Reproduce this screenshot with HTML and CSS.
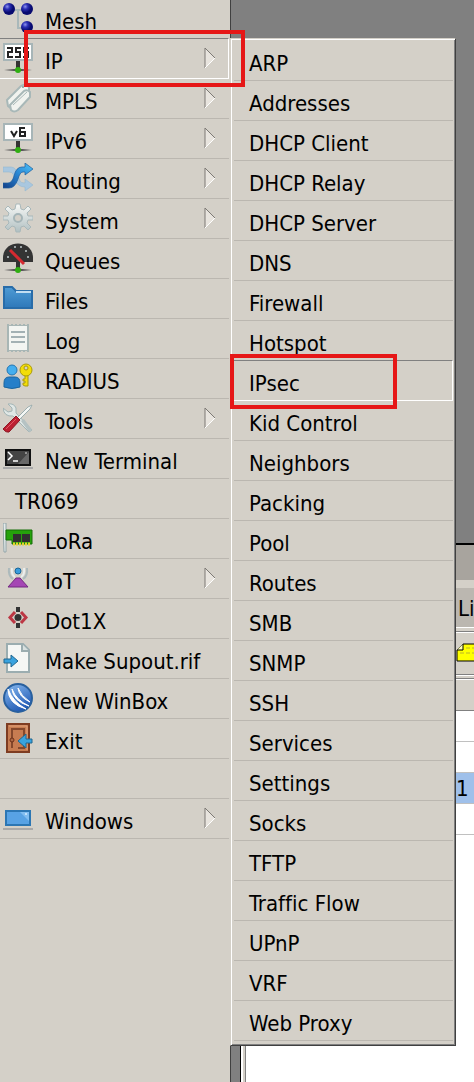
FILE: index.html
```html
<!DOCTYPE html>
<html lang="en">
<head>
<meta charset="utf-8">
<meta name="viewport" content="width=device-width">
<title>WinBox</title>
<link rel="stylesheet" href="styles.css">
</head>
<body>
<div class="app">
<nav class="menu" aria-label="Main menu">
<button class="item first"><svg class="icon" viewBox="0 0 30 30"><defs><radialGradient id="ball" cx=".35" cy=".3"><stop offset="0" stop-color="#8f95ee"/><stop offset=".45" stop-color="#2a2eb4"/><stop offset="1" stop-color="#080a70"/></radialGradient></defs><path d="M6 7h18M15 7v18h9" fill="none" stroke="#a9b8ba" stroke-width="2"/><circle cx="6" cy="6" r="6" fill="url(#ball)"/><circle cx="24" cy="6" r="6" fill="url(#ball)"/><circle cx="24" cy="24" r="6" fill="url(#ball)"/></svg><span>Mesh</span></button>
<button class="item open" aria-expanded="true"><svg class="icon" viewBox="0 0 30 30"><path d="M1 1h28v16H1z" fill="#fff" stroke="#a7b5b7" stroke-width="2"/><path d="M4 5h5v4H5v5h5M18 5h-5v4h4v5h-5M26 5h-5v4h4v5h-5" fill="none" stroke="#222" stroke-width="2"/><path d="M13 18h4v7h-4z" fill="#333"/><path d="M1 27l10-1h8l10 1-10 1h-8z" fill="#555"/><circle cx="15" cy="27" r="3" fill="#2fae12"/></svg><span>IP</span><svg class="arrow" viewBox="0 0 12 22"><path d="M1 1l10 10L1 21z" fill="#e8e4de"/><path d="M1 21V1l10 10" fill="none" stroke="#7c7974"/><path d="M11 11L1 21" stroke="#fff"/></svg></button>
<button class="item"><svg class="icon" viewBox="0 0 30 30"><g fill="#f1f3ef" stroke="#a8b8b8" stroke-width="2"><path d="M4 17L18 3q4-3 8 1v6L13 24q-4 3-8-1z"/><path d="M7 22L21 8q3-2 6 1v5L15 27q-4 3-7 0z"/><path d="M10 22L24 9" fill="none" stroke-width="1"/></g><circle cx="20" cy="4" r="1" fill="#859898"/></svg><span>MPLS</span><svg class="arrow" viewBox="0 0 12 22"><path d="M1 1l10 10L1 21z" fill="#e8e4de"/><path d="M1 21V1l10 10" fill="none" stroke="#7c7974"/><path d="M11 11L1 21" stroke="#fff"/></svg></button>
<button class="item"><svg class="icon" viewBox="0 0 30 30"><path d="M1 1h28v16H1z" fill="#fff" stroke="#a7b5b7" stroke-width="2"/><path d="M8 8l3 5 3-5M22 5h-5v8h5V9h-5" fill="none" stroke="#222" stroke-width="2"/><path d="M13 18h4v7h-4z" fill="#333"/><path d="M1 27l10-1h8l10 1-10 1h-8z" fill="#555"/><circle cx="15" cy="27" r="3" fill="#2fae12"/></svg><span>IPv6</span><svg class="arrow" viewBox="0 0 12 22"><path d="M1 1l10 10L1 21z" fill="#e8e4de"/><path d="M1 21V1l10 10" fill="none" stroke="#7c7974"/><path d="M11 11L1 21" stroke="#fff"/></svg></button>
<button class="item"><svg class="icon" viewBox="0 0 30 30"><defs><linearGradient id="route" x1="0" y1="1" x2="1" y2="0"><stop offset="0" stop-color="#123f87"/><stop offset=".5" stop-color="#2782d0"/><stop offset="1" stop-color="#4fc4fa"/></linearGradient></defs><path d="M0 4h8q5 0 7 8l2 6q1 2 5 2v-4l8 6-8 6v-4q-8 0-10-8l-2-5q-1-2-4-2H0z" fill="#a9c7df" stroke="#96b9d2" stroke-width=".6"/><path d="M0 20h5q4 0 6-7 2-9 8-9h3V0l8 6-8 6V9h-2q-3 0-5 7-3 9-9 9H0z" fill="url(#route)" stroke="#1d5c9c" stroke-width=".7"/></svg><span>Routing</span><svg class="arrow" viewBox="0 0 12 22"><path d="M1 1l10 10L1 21z" fill="#e8e4de"/><path d="M1 21V1l10 10" fill="none" stroke="#7c7974"/><path d="M11 11L1 21" stroke="#fff"/></svg></button>
<button class="item"><svg class="icon" viewBox="0 0 30 30"><defs><linearGradient id="gear" x2="0" y2="1"><stop offset="0" stop-color="#f7f8f6"/><stop offset="1" stop-color="#b1c0c2"/></linearGradient></defs><path d="M13 1h4l1 5 3 1 4-4 3 3-4 4 1 3h5v4h-5l-1 3 4 4-3 3-4-4-3 1-1 5h-4l-1-5-3-1-4 4-3-3 4-4-1-3H0v-4h5l1-3-4-4 3-3 4 4 3-1z" fill="url(#gear)" stroke="#a9b8ba"/><circle cx="15" cy="15" r="4" fill="#d4d0c8" stroke="#a5b5b8" stroke-width="2"/></svg><span>System</span><svg class="arrow" viewBox="0 0 12 22"><path d="M1 1l10 10L1 21z" fill="#e8e4de"/><path d="M1 21V1l10 10" fill="none" stroke="#7c7974"/><path d="M11 11L1 21" stroke="#fff"/></svg></button>
<button class="item"><svg class="icon" viewBox="0 0 30 30"><path d="M0 19v-5C1-4 29-4 30 14v5z" fill="#343434"/><g fill="#bfc8cb"><circle cx="5" cy="14" r="1"/><circle cx="12" cy="4" r="1"/><circle cx="18" cy="4" r="1"/><circle cx="23" cy="8" r="1"/><circle cx="25" cy="14" r="1"/></g><path d="M7 7l14 14" stroke="#d52a30" stroke-width="3"/><path d="M13 19h4v7h-4z" fill="#333"/><path d="M1 27l10-1h8l10 1-10 1h-8z" fill="#555"/><circle cx="15" cy="27" r="3" fill="#2fae12"/></svg><span>Queues</span></button>
<button class="item"><svg class="icon" viewBox="0 0 30 30"><defs><linearGradient id="folder" x2="0" y2="1"><stop offset="0" stop-color="#4e9bd5"/><stop offset="1" stop-color="#2e78b9"/></linearGradient></defs><path d="M1 4h8l4 4h16v17H1z" fill="url(#folder)" stroke="#286ca9" stroke-width="2"/><path d="M13 9h15" stroke="#9dcaec" stroke-width="2"/><path d="M13 9h15" stroke="#e8f2f8"/></svg><span>Files</span></button>
<button class="item"><svg class="icon" viewBox="0 0 30 30"><path d="M5 2h20v26H5z" fill="#f3f5f2" stroke="#a8b6b5" stroke-width="2"/><path d="M6 1h19M6 29h19" stroke="#d4d0c8" stroke-width="2" stroke-dasharray="2 2"/><path d="M8 9h14M8 14h14M8 19h14" stroke="#a3b1b4" stroke-width="2"/></svg><span>Log</span></button>
<button class="item"><svg class="icon" viewBox="0 0 30 30"><path d="M1 24v-4q0-6 5-6h6q5 0 5 6v4q-8 3-16 0z" fill="#267fc9" stroke="#1b659f"/><circle cx="9" cy="7" r="5" fill="#44aeef" stroke="#2475b1"/><g fill="#f3dd08" stroke="#aa9b0a"><path d="M22 11h3v12h-3l-2-1v-2h2v-2h-2v-2h2z"/><circle cx="23" cy="7" r="6"/></g><circle cx="23" cy="5" r="2" fill="#d4d0c8" stroke="#aa9b0a"/></svg><span>RADIUS</span></button>
<button class="item"><svg class="icon" viewBox="0 0 30 30"><path d="M5 1q6-1 8 4v5l16 17-3 2-16-16Q1 14 0 5l5 4 4-1V5z" fill="#e0e7e5" stroke="#a2b4b5"/><path d="M29 2l-2 4-11 11-2-2L25 4z" fill="#f4f6f4" stroke="#9caeaf"/><path d="M18 18l3-2 8 11-3 2z" fill="#b5c2c3"/><path d="M13 13l4 4L6 29q-3 1-6-3z" fill="#bd2032" stroke="#8d1623"/><path d="M13 16L3 26" stroke="#e25765"/></svg><span>Tools</span><svg class="arrow" viewBox="0 0 12 22"><path d="M1 1l10 10L1 21z" fill="#e8e4de"/><path d="M1 21V1l10 10" fill="none" stroke="#7c7974"/><path d="M11 11L1 21" stroke="#fff"/></svg></button>
<button class="item"><svg class="icon" viewBox="0 0 30 30"><path d="M3 7h24v15H3z" fill="#444" stroke="#111" stroke-width="2"/><path d="M15 21L26 9v12z" fill="#686868"/><path d="M5 9l4 4-4 4M10 18h5" fill="none" stroke="#fff" stroke-width="1.5"/><circle cx="23" cy="10" r="1" fill="#aaa"/><path d="M0 25h30" stroke="#a8a8a8" stroke-width="2"/></svg><span>New Terminal</span></button>
<button class="item plain"><span>TR069</span></button>
<button class="item"><svg class="icon" viewBox="0 0 30 30"><path d="M0 0h3v29H1z" fill="#e4ebea" stroke="#92a4a8"/><path d="M3 7h26v14H9v-4H3z" fill="#25a20b" stroke="#176f08"/><path d="M10 11h8v8h-8zM19 11h8v8h-8z" fill="#303030"/><path d="M10 21h17" stroke="#e4d32d" stroke-width="3" stroke-dasharray="2 1"/></svg><span>LoRa</span></button>
<button class="item"><svg class="icon" viewBox="0 0 30 30"><path d="M5 24h20L17 15h-4z" fill="#a546b4" stroke="#722981"/><circle cx="15" cy="8" r="3" fill="#399cdd" stroke="#176598"/><path d="M9 5q-1 7 3 9M21 5q1 7-3 9" fill="none" stroke="#e9eeee" stroke-width="2"/><path d="M6 5q-1 8 4 11M24 5q1 8-4 11" fill="none" stroke="#adbabc" stroke-width="2"/></svg><span>IoT</span><svg class="arrow" viewBox="0 0 12 22"><path d="M1 1l10 10L1 21z" fill="#e8e4de"/><path d="M1 21V1l10 10" fill="none" stroke="#7c7974"/><path d="M11 11L1 21" stroke="#fff"/></svg></button>
<button class="item"><svg class="icon" viewBox="0 0 30 30"><path d="M13 4h4v5h-4zM13 20h4v5h-4z" fill="#333"/><circle cx="15" cy="14.5" r="3.5" fill="#333"/><path d="M12 9l-5 5.500 5 5.500M18 9l5 5.500-5 5.500" fill="none" stroke="#bc3744" stroke-width="3"/></svg><span>Dot1X</span></button>
<button class="item"><svg class="icon" viewBox="0 0 30 30"><path d="M4 1h16l6 6v22H4z" fill="#f5f7f5" stroke="#9badb0" stroke-width="2"/><path d="M19 1v7h7" fill="#d8e0df" stroke="#9badb0" stroke-width="2"/><path d="M1 16h7v-4l7 6-7 6v-4H1z" fill="#39a3df" stroke="#21678f"/></svg><span>Make Supout.rif</span></button>
<button class="item"><svg class="icon" viewBox="0 0 30 30"><defs><linearGradient id="globe" x2=".5" y2="1"><stop offset="0" stop-color="#8bbcf1"/><stop offset="1" stop-color="#225bb5"/></linearGradient></defs><circle cx="15" cy="15" r="14" fill="url(#globe)" stroke="#29609e" stroke-width="2"/><path d="M5 6q0 15 18 20-13-7-18-20M9 6q1 12 17 17Q13 17 9 6M15 5q1 9 12 14Q18 13 15 5" fill="#fff" stroke="#fff"/></svg><span>New WinBox</span></button>
<button class="item"><svg class="icon" viewBox="0 0 30 30"><path d="M4 1h22v28H4z" fill="#c77c51" stroke="#7e3c21" stroke-width="2"/><path d="M9 25V6h12v19h-6" fill="none" stroke="#85482c" stroke-width="2"/><path d="M6 3h18v24" fill="none" stroke="#e2a37d"/><circle cx="9" cy="17" r="2" fill="#ab6845" stroke="#6e3019"/><path d="M29 16h-6v-5l-8 7 8 7v-5h6z" fill="#39a3df" stroke="#21678f"/></svg><span>Exit</span></button>
<div class="spacer"></div>
<button class="item"><svg class="icon" viewBox="0 0 30 30"><path d="M3 8h24v14H3z" fill="#58a2e4" stroke="#2c76b3" stroke-width="2"/><path d="M17 9h9v9z" fill="#82bdf0"/><circle cx="23" cy="11" r="1" fill="#d4edff"/><path d="M0 26h30" stroke="#aaa9a8" stroke-width="2"/></svg><span>Windows</span><svg class="arrow" viewBox="0 0 12 22"><path d="M1 1l10 10L1 21z" fill="#e8e4de"/><path d="M1 21V1l10 10" fill="none" stroke="#7c7974"/><path d="M11 11L1 21" stroke="#fff"/></svg></button>
</nav>
<main class="workspace">
<section class="window">
<div class="titlebar"></div>
<div class="tab">Li</div>
<div class="tools"><svg class="note" viewBox="0 0 30 20"><path d="M7 1h22v17H1V7z" fill="#ff0" stroke="#000"/><path d="M7 1v6H1" fill="#ffffb0" stroke="#000"/><path d="M10 5h16M4 10h22" stroke="#bbb42c" stroke-dasharray="4 2"/></svg></div>
<div class="gap"></div>
<div class="head"></div>
<div class="row"></div>
<div class="row"></div>
<div class="row chosen">1</div>
<div class="row"></div>
</section>
</main>
<nav class="submenu" aria-label="IP menu">
<button class="item">ARP</button>
<button class="item">Addresses</button>
<button class="item">DHCP Client</button>
<button class="item">DHCP Relay</button>
<button class="item">DHCP Server</button>
<button class="item">DNS</button>
<button class="item">Firewall</button>
<button class="item">Hotspot</button>
<button class="item open">IPsec</button>
<button class="item">Kid Control</button>
<button class="item">Neighbors</button>
<button class="item">Packing</button>
<button class="item">Pool</button>
<button class="item">Routes</button>
<button class="item">SMB</button>
<button class="item">SNMP</button>
<button class="item">SSH</button>
<button class="item">Services</button>
<button class="item">Settings</button>
<button class="item">Socks</button>
<button class="item">TFTP</button>
<button class="item">Traffic Flow</button>
<button class="item">UPnP</button>
<button class="item">VRF</button>
<button class="item">Web Proxy</button>
</nav>
<div class="mark mark-ip"></div>
<div class="mark mark-ipsec"></div>
</div>
</body>
</html>
```
FILE: styles.css
```css
* { box-sizing: border-box; }
body {
  margin: 0;
  background: #808080;
  color: #000;
  font-family: Tahoma, "DejaVu Sans Condensed", "DejaVu Sans", sans-serif;
  font-size: 22px;
  font-variant-ligatures: none;
}
.app {
  position: relative;
  display: grid;
  grid-template-columns: 231px 1fr;
  min-height: 100vh;
  overflow: hidden;
}
.menu {
  background: #d4d0c8;
  border-right: 1px solid #404040;
  padding-right: 1px;
}
.item {
  position: relative;
  display: flex;
  width: 100%;
  height: 40px;
  align-items: flex-start;
  padding: 4px 13px 0 3px;
  border: 0;
  border-bottom: 1px solid #bbb7b0;
  background: none;
  color: inherit;
  font: inherit;
  font-variant-ligatures: none;
  line-height: 37px;
  text-align: left;
  white-space: nowrap;
}
.item.first { height: 39px; padding-top: 3px; }
.item.plain { padding-left: 15px; }
.item.open { border-bottom-color: #fff; }
.item.open::before {
  content: "";
  position: absolute;
  inset: -1px 0 -1px 0;
  border-top: 1px solid #808080;
  border-right: 1px solid #fff;
}
.icon { width: 30px; height: 30px; flex: none; margin-right: 12px; }
.arrow { width: 12px; height: 22px; margin: 4px 0 0 auto; }
.spacer { height: 40px; border-bottom: 1px solid #bbb7b0; }
.submenu {
  position: absolute;
  top: 38px;
  left: 230px;
  width: 226px;
  padding: 2px 2px 4px 3px;
  background: #d4d0c8;
  border: 1px solid #404040;
  border-top-color: #d4d0c8;
  border-left-color: #d4d0c8;
  box-shadow: inset 1px 1px #fff, inset -1px -1px #808080;
}
.submenu .item { padding-left: 15px; }
.mark { position: absolute; border: 4px solid #e61717; }
.mark-ip { top: 30px; left: 24px; width: 221px; height: 57px; }
.mark-ipsec { top: 354px; left: 230px; width: 167px; height: 55px; }
.workspace { display: flex; padding: 543px 0 0 9px; }
.window {
  flex: 1;
  background: #fff;
  border-top: 2px solid #000;
  border-left: 1px solid #000;
  box-shadow: inset 2px 0 #fff, inset 4px 0 #d4d0c8, inset 5px 0 #808080;
}
.titlebar { height: 43px; background: #a8a49e; border-bottom: 8px solid #d4d0c8; }
.tab {
  height: 40px;
  padding-left: 217px;
  background: #bbb7b0;
  border-bottom: 1px solid #fff;
  line-height: 42px;
}
.tools {
  height: 44px;
  padding: 11px 0 0 215px;
  background: #d4d0c8;
  border-top: 1px solid #808080;
  border-bottom: 1px solid #808080;
  box-shadow: inset 0 1px #fff, 0 -3px #d4d0c8;
  margin-top: 3px;
}
.note { display: block; width: 30px; height: 20px; }
.gap { height: 4px; background: #d4d0c8; border-bottom: 1px solid #808080; border-top: 1px solid #fff; }
.head { height: 32px; background: #d4d0c8; border-top: 1px solid #fff; border-bottom: 1px solid #808080; }
.row { height: 31px; padding-left: 215px; border-bottom: 1px solid #c0c0c0; line-height: 31px; }
.row.chosen { background: #9fc0ea; }
```
